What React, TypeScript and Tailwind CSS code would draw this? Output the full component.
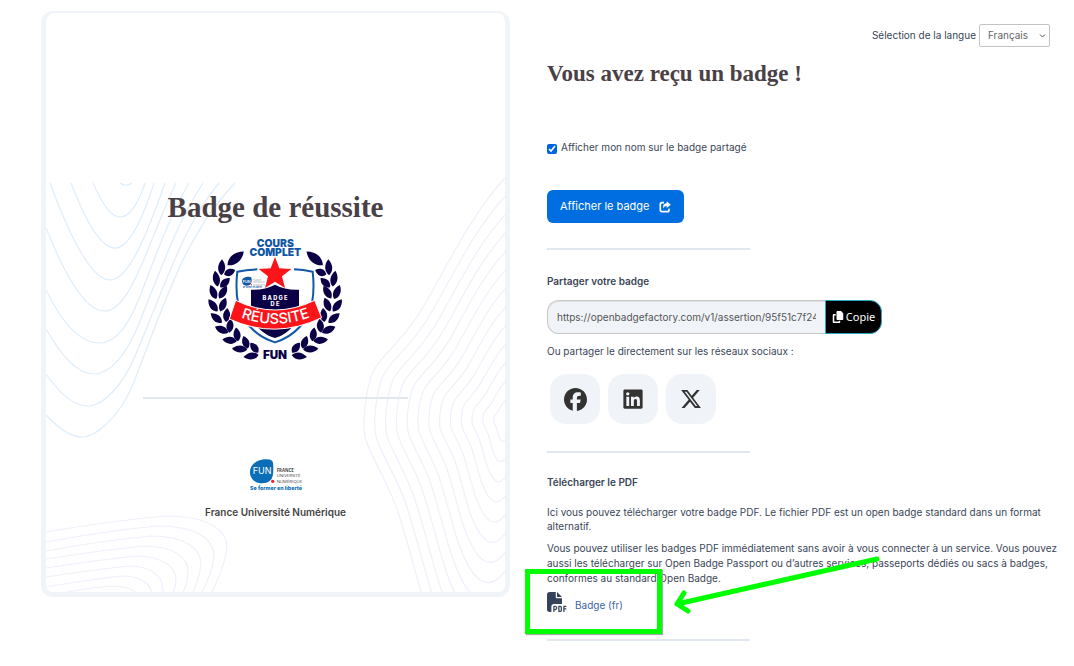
import { useState } from "react";
import type { ReactNode } from "react";
import { FaCopy, FaFacebook, FaFilePdf, FaLinkedin, FaXTwitter } from "react-icons/fa6";

const BLUE_WAVES = [
  "M120 183Q126 187.500 132 183",
  "M93 183C103 206 112 217 120 217S137 207 145 183",
  "M71 183C88 227 103 248 115 248S140 227 154 183",
  "M50 183C70 237 92 280 110 280S145 240 165 183",
  "M46 228C66 278 86 311 104 311S134 282 145 257Q166 204 176 183",
  "M46 290C62 323 80 343 99 343S129 322 139 299C160 244 172 212 189 183",
  "M46 329C62 357 78 374 94 374S126 355 138 326C165 258 179 220 203 183",
  "M46 374C60 394 74 406 88 406S122 388 136 354C170 272 186 222 219 183",
  "M46 415C60 430 71 437 82 437S118 422 134 382C168 292 188 232 235 183",
];

const HILLS = [
  "M46 532Q110 521 165 516C205 516 227 528 227 548Q225 565 212 592",
  "M46 542Q105 531 157 526C195 526 214 538 214 557Q212 573 202 592",
  "M46 551Q100 541 151 536C184 536 201 548 201 564Q200 576 193 592",
  "M46 559Q95 551 143 546C173 546 188 557 188 571Q188 582 183 592",
  "M46 568Q90 561 135 556C162 556 176 567 176 579Q176 586 173 592",
  "M46 577Q85 571 128 566C152 566 164 577 163 592",
  "M46 587Q80 581 121 576C140 576 151 584 151 592",
  "M67 592Q95 587 113 586Q130 587 135 592",
];

function contour(index: number): string {
  const s = (141 - index * 10.8) / 141;
  const p = (dx: number, dy: number) => `${(505 - dx * s).toFixed(1)} ${(420 + dy * s).toFixed(1)}`;
  return [
    `M${p(0, -242)}`,
    `C${p(30, -210)} ${p(52, -166)} ${p(77, -121)}`,
    `C${p(100, -80)} ${p(120, -69)} ${p(131, -50)}`,
    `C${p(139, -34)} ${p(144, 4)} ${p(139, 20)}`,
    `C${p(133, 39)} ${p(116, 64)} ${p(107, 92)}`,
    `C${p(94, 132)} ${p(86, 168)} ${p(76, 198)}`,
    `C${p(52, 266)} ${p(26, 280)} ${p(0, 245)}`,
  ].join("");
}

const CONTOURS = Array.from({ length: 13 }, (_, i) => contour(i));

function CardPattern() {
  return (
    <svg
      className="absolute inset-0 h-full w-full"
      viewBox="46 13 459 579"
      preserveAspectRatio="xMidYMid slice"
      fill="none"
      aria-hidden="true"
    >
      <g stroke="#deedfa" strokeWidth="1.200">
        {BLUE_WAVES.map((d) => (
          <path key={d} d={d} />
        ))}
      </g>
      <g stroke="#f1effb" strokeWidth="1.200">
        {[...HILLS, ...CONTOURS].map((d) => (
          <path key={d} d={d} />
        ))}
      </g>
    </svg>
  );
}

type Leaf = [x: number, y: number, angle: number, length: number];

const LEAVES: Leaf[] = [
  [122, 88, 50, 64],
  [80, 115, 3, 48],
  [104, 130, 68, 36],
  [64, 149, -10, 48],
  [90, 161, 46, 40],
  [55, 189, -22, 46],
  [84, 190, 32, 44],
  [54, 229, -36, 46],
  [84, 227, 22, 44],
  [64, 267, -50, 44],
  [95, 258, 5, 42],
  [80, 302, -66, 44],
  [105, 290, 6, 42],
  [104, 334, -84, 44],
  [126, 316, -8, 42],
  [134, 360, -88, 46],
  [152, 340, -20, 40],
  [168, 381, -98, 46],
  [178, 356, -38, 38],
];

function Leaves() {
  return (
    <>
      {LEAVES.map(([x, y, angle, length]) => {
        const h = length / 2;
        const w = length > 50 ? 18 : 14;
        return (
          <path
            key={`${x}-${y}`}
            transform={`translate(${x} ${y}) rotate(${angle})`}
            d={`M0 ${-h}C${w} ${-h / 3} ${w} ${h / 2} 0 ${h}C${-w} ${h / 2} ${-w} ${-h / 3} 0 ${-h}Z`}
          />
        );
      })}
    </>
  );
}

function SuccessBadge() {
  return (
    <svg
      className="mt-1 h-[140px] w-[160px]"
      viewBox="3 0 480 420"
      role="img"
      aria-label="Badge de réussite, cours complet"
      fontFamily="Inter, sans-serif"
      textAnchor="middle"
    >
      <g fill="#0b0045">
        <Leaves />
        <g transform="translate(481 0) scale(-1 1)">
          <Leaves />
        </g>
      </g>
      <g fill="none" stroke="#1157a6" strokeWidth="6">
        <path d="M187 121Q155 122 127 128Q121 180 129 222C140 275 180 322 240 340C300 322 340 275 351 222Q359 180 353 128Q325 122 297 121" />
      </g>
      <path
        fill="#0b0045"
        d="M168 182Q208 184 240 167Q272 184 312 182V250C310 285 275 318 240 327C205 318 170 285 168 250Z"
      />
      <path fill="#fb151b" d="M240 84L253 118L289 120L261 142L270 177L240 158L210 177L219 142L191 120L227 118Z" />
      <path
        fill="#fb151b"
        stroke="#fff"
        strokeWidth="3"
        d="M122 214Q240 272 359 214L380 266Q240 333 103 270Z"
      />
      <path id="banner-line" fill="none" d="M105 253Q242 316 378 251" />
      <text fill="#fff" fontSize="44" fontWeight="500">
        <textPath href="#banner-line" startOffset="50%">
          RÉUSSITE
        </textPath>
      </text>
      <g fill="#fff" fontSize="17" fontWeight="800">
        <text x="240" y="212">B A D G E</text>
        <text x="240" y="230">D E</text>
      </g>
      <text fill="#1157a6" fontSize="31" fontWeight="900">
        <tspan x="241" y="53">
          COURS
        </tspan>
        <tspan x="241" y="80">
          COMPLET
        </tspan>
      </text>
      <text x="240" y="389" fill="#0b0045" fontSize="35" fontWeight="900">
        FUN
      </text>
      <path fill="#1157a6" d="M141 156C141 143 165 141 169 146C172 158 169 170 155 170C146 170 141 165 141 156Z" />
      <text x="155" y="161" fill="#fff" fontSize="11" fontWeight="600">
        FUN
      </text>
      <g fill="#9aa0aa" fontSize="6" textAnchor="start">
        <text x="174" y="156">FRANCE</text>
        <text x="174" y="163">UNIVERSITÉ</text>
        <text x="174" y="170">NUMÉRIQUE</text>
      </g>
      <circle cx="169" cy="167" r="2" fill="#fb151b" />
      <text x="172" y="178" fill="#1157a6" fontSize="6" fontWeight="700">
        Se former en liberté
      </text>
    </svg>
  );
}

function FunLogo() {
  return (
    <svg
      className="mt-[46px] h-[60px] w-[90px]"
      viewBox="3 0 270 180"
      role="img"
      aria-label="FUN, France Université Numérique"
      fontFamily="Inter, sans-serif"
    >
      <path
        fill="#0a6db8"
        d="M103 43Q127 41 129 53Q131 66 129 88C127 106 114 115 97 115C76 115 60 102 60 81C60 58 82 45 103 43Z"
      />
      <text x="68" y="88" fill="#fff" fontSize="27">
        FUN
      </text>
      <circle cx="128" cy="109" r="5" fill="#ee1c2e" />
      <g fill="#444" fontSize="13" fontFamily="Open Sans, sans-serif">
        <text x="140" y="81" fontWeight="700">
          FRANCE
        </text>
        <text x="140" y="97">UNIVERSITÉ</text>
        <text x="140" y="113">NUMÉRIQUE</text>
      </g>
      <text x="60" y="135" fill="#0a6db8" fontSize="16" fontWeight="800">
        Se former en liberté
      </text>
    </svg>
  );
}

function ShareIcon() {
  return (
    <svg className="size-3" viewBox="0 0 12 12" aria-hidden="true">
      <path
        d="M5 1.600H3A1.700 1.700 0 0 0 1.300 3.300V8.900A1.700 1.700 0 0 0 3 10.600H8.300A1.700 1.700 0 0 0 10 8.900V7.800"
        fill="none"
        stroke="currentColor"
        strokeWidth="1.700"
      />
      <path
        d="M7.700 0.300L11.800 3.700L7.700 7.100V5.100C5.900 5.100 5.200 5.800 4.700 7.600C3.400 4.600 4.600 2.400 7.700 2.300Z"
        fill="currentColor"
      />
    </svg>
  );
}

function BadgeCard() {
  return (
    <section className="relative flex flex-col items-center overflow-hidden rounded-xl border-[5px] border-t-2 border-[#f0f4f9] bg-white pt-[176px] pb-[73px]">
      <CardPattern />
      <div className="relative flex w-full flex-col items-center">
        <h2 className="font-['Liberation_Serif',serif] text-[29px] leading-9 font-bold text-[#494146]">
          Badge de réussite
        </h2>
        <SuccessBadge />
        <hr className="mt-7 w-[265px] border-t-2 border-[#e1e7ee]" />
        <FunLogo />
        <p className="leading-[14px] font-semibold text-[#444]">France Université Numérique</p>
      </div>
    </section>
  );
}

function LanguagePicker() {
  return (
    <div className="flex items-center justify-end gap-[3px]">
      <label htmlFor="language">Sélection de la langue</label>
      <div className="relative">
        <select
          id="language"
          defaultValue="fr"
          className="block h-[23px] w-[71px] appearance-none rounded-xs border border-[#c3c3c3] bg-white pl-2 text-[#666]"
        >
          <option value="fr">Français</option>
          <option value="en">English</option>
        </select>
        <svg
          className="pointer-events-none absolute top-[9px] right-1 h-[6px] w-[7px]"
          viewBox="0 0 7 6"
          fill="none"
          stroke="#555"
          aria-hidden="true"
        >
          <path d="M1 1.500L3.500 4L6 1.500" />
        </svg>
      </div>
    </div>
  );
}

function SocialLink({ label, children }: { label: string; children: ReactNode }) {
  return (
    <a
      href="#"
      aria-label={label}
      className="flex size-[50px] items-center justify-center rounded-2xl bg-[#f0f4f9] text-[#333]"
    >
      {children}
    </a>
  );
}

function Divider({ className }: { className: string }) {
  return <hr className={`w-[203px] border-t-2 border-[#e1e7ee] ${className}`} />;
}

function PdfCallout() {
  return (
    <>
      <div className="pointer-events-none absolute -top-[22px] -left-[22px] h-[65px] w-[137px] border-[5px] border-[#00ff00] shadow-[1px_1px_1px_#aaa]" />
      <svg
        className="pointer-events-none absolute -top-[41px] left-[122px] h-[70px] w-[216px]"
        viewBox="669 550 216 70"
        fill="none"
        stroke="#00ff00"
        strokeWidth="5"
        strokeLinecap="round"
        strokeLinejoin="round"
        aria-hidden="true"
      >
        <path d="M877 559L677 604M684 593L677 604L688 611" />
      </svg>
    </>
  );
}

function ReceivedBadge() {
  const [showName, setShowName] = useState(true);
  return (
    <section className="pt-[13px]">
      <LanguagePicker />
      <h1 className="mt-[11px] font-['Liberation_Serif',serif] text-[23px] leading-8 font-bold text-[#494146]">
        Vous avez reçu un badge !
      </h1>

      <label className="mt-[50px] flex items-center gap-1 leading-[14px]">
        <input
          type="checkbox"
          checked={showName}
          onChange={(event) => setShowName(event.target.checked)}
          className="mt-1 size-[10px] accent-[#0063e0]"
        />
        Afficher mon nom sur le badge partagé
      </label>

      <button
        type="button"
        className="mt-9 flex h-[33px] items-center gap-[9px] rounded-md bg-[#006ee0] px-[13px] text-[11px] text-white"
      >
        Afficher le badge
        <ShareIcon />
      </button>

      <Divider className="mt-[25px]" />

      <h3 className="mt-6 leading-[14px] font-semibold">
        <label htmlFor="share-url">Partager votre badge</label>
      </h3>
      <div className="mt-3 flex h-[34px] w-[335px]">
        <input
          id="share-url"
          readOnly
          value="https://openbadgefactory.com/v1/assertion/95f51c7f244ab0"
          className="min-w-0 flex-1 rounded-l-xl border border-r-0 border-[#c8c8c8] bg-[#f0f4f9] px-[9px] text-[#555] shadow-[inset_0_1px_1px_#ddd]"
        />
        <button
          type="button"
          className="flex w-[57px] items-center justify-center gap-[2px] rounded-r-xl border border-[#2aa5c4] bg-black font-['Noto_Sans',sans-serif] text-[11px] text-white"
        >
          <FaCopy className="size-3" aria-hidden="true" />
          Copie
        </button>
      </div>

      <p className="mt-[10px] leading-[14px]">Ou partager le directement sur les réseaux sociaux :</p>
      <div className="mt-4 flex gap-2 pl-[3px]">
        <SocialLink label="Facebook">
          <FaFacebook className="size-[23px]" />
        </SocialLink>
        <SocialLink label="LinkedIn">
          <FaLinkedin className="size-[22px]" />
        </SocialLink>
        <SocialLink label="X">
          <FaXTwitter className="size-[22px]" />
        </SocialLink>
      </div>

      <Divider className="mt-[27px]" />

      <h3 className="mt-[22px] leading-[14px] font-semibold">Télécharger le PDF</h3>
      <p className="mt-4 leading-[14px]">
        Ici vous pouvez télécharger votre badge PDF. Le fichier PDF est un open badge standard dans un format
        alternatif.
      </p>
      <p className="-mr-[14px] mt-2 leading-[15px]">
        Vous pouvez utiliser les badges PDF immédiatement sans avoir à vous connecter à un service. Vous pouvez
        aussi les télécharger sur Open Badge Passport ou d’autres services, passeports dédiés ou sacs à badges,
        conformes au standard Open Badge.
      </p>
      <div className="relative mt-[5px] flex">
        <a href="#" className="flex h-[22px] items-center gap-2 text-[#3c62a8]">
          <FaFilePdf className="size-5 text-[#34425a]" aria-hidden="true" />
          <span className="pt-[6px]">Badge (fr)</span>
        </a>
        <PdfCallout />
      </div>

      <Divider className="mt-[26px]" />
    </section>
  );
}

export default function App() {
  return (
    <main className="grid min-h-screen grid-cols-[469fr_503fr] items-start gap-[37px] bg-white pt-[11px] pr-6 pb-6 pl-[41px] font-['Inter',sans-serif] text-[10px] text-[#3a4658]">
      <BadgeCard />
      <ReceivedBadge />
    </main>
  );
}
